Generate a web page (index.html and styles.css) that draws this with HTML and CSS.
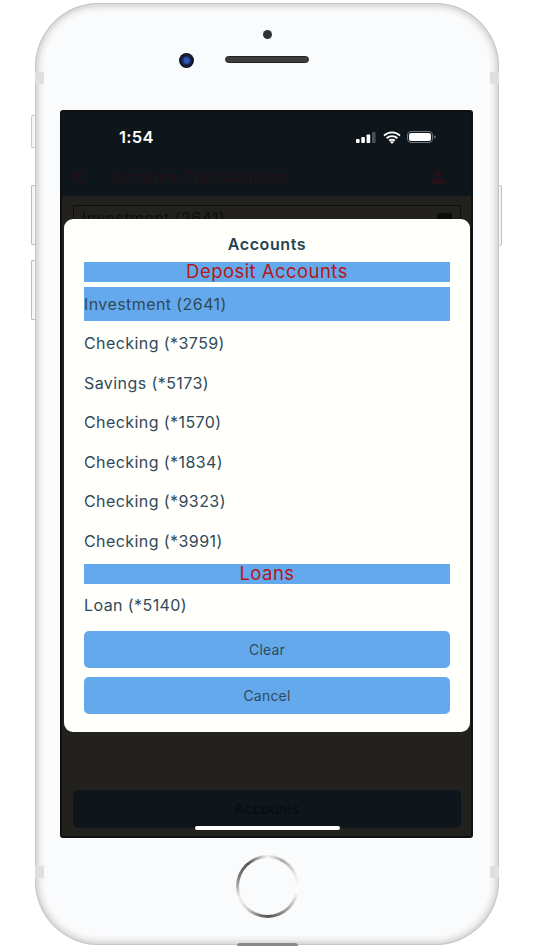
FILE: index.html
```html
<!DOCTYPE html>
<html lang="en">
<head>
<meta charset="utf-8">
<title>Accounts</title>
<link rel="stylesheet" href="styles.css">
</head>
<body>
<div class="phone">
  <span class="side side-mute"></span>
  <span class="side side-up"></span>
  <span class="side side-down"></span>
  <span class="side side-power"></span>
  <span class="notch notch-tl"></span>
  <span class="notch notch-tr"></span>
  <span class="notch notch-bl"></span>
  <span class="notch notch-br"></span>
  <span class="dock"></span>
  <div class="bezel-top">
    <span class="sensor"></span>
    <div class="speaker"><span class="camera"></span></div>
  </div>
  <div class="screen">
    <div class="app-head">
      <div class="status">
        <span class="time">1:54</span>
        <div class="status-icons">
          <svg width="21" height="11" viewBox="0 0 21 11"><rect x="0" y="7" width="3.6" height="4" rx=".8" fill="#fff"/><rect x="5.3" y="5" width="3.6" height="6" rx=".8" fill="#fff"/><rect x="10.6" y="2.5" width="3.6" height="8.5" rx=".8" fill="#fff"/><rect x="16" y="0" width="3.6" height="11" rx=".8" fill="#4a5055"/></svg>
          <svg width="18" height="13" viewBox="0 0 18 13"><path d="M1 4.6a11.5 11.5 0 0 1 16 0M3.6 7.3a7.8 7.8 0 0 1 10.8 0M6.2 9.8a4 4 0 0 1 5.6 0" fill="none" stroke="#fff" stroke-width="1.9"/><path d="M9 13l-1.9-2.2a2.8 2.8 0 0 1 3.8 0z" fill="#fff"/></svg>
          <svg width="29" height="12" viewBox="0 0 29 12"><rect x=".5" y=".5" width="25" height="11" rx="3.5" fill="none" stroke="#70767a"/><rect x="2" y="2" width="22" height="8" rx="2.2" fill="#fff"/><rect x="27" y="4.5" width="1.5" height="3" rx=".7" fill="#70767a"/></svg>
        </div>
      </div>
      <div class="nav">
        <svg class="back" width="12" height="18" viewBox="0 0 12 18"><path d="M10 2L3 9l7 7" fill="none" stroke="#260f15" stroke-width="2.4"/></svg>
        <span class="nav-title">Account Transactions</span>
        <svg class="user" width="14" height="14" viewBox="0 0 14 14"><circle cx="7" cy="3.6" r="3.3" fill="#260f15"/><path d="M0.500 14v-2.500C.5 9.300 3 8 7 8s6.500 1.300 6.500 3.500V14z" fill="#260f15"/></svg>
      </div>
    </div>
    <div class="app-body">
      <div class="select">
        <span>Investment (2641)</span>
        <span class="select-mark"></span>
      </div>
      <div class="accounts-btn">Accounts</div>
    </div>
    <span class="home-bar"></span>
    <div class="modal">
      <h2 class="modal-title">Accounts</h2>
      <div class="section">Deposit Accounts</div>
      <div class="row selected">Investment (2641)</div>
      <div class="row">Checking (*3759)</div>
      <div class="row">Savings (*5173)</div>
      <div class="row">Checking (*1570)</div>
      <div class="row">Checking (*1834)</div>
      <div class="row">Checking (*9323)</div>
      <div class="row">Checking (*3991)</div>
      <div class="section loans">Loans</div>
      <div class="row loan">Loan (*5140)</div>
      <div class="btn">Clear</div>
      <div class="btn">Cancel</div>
    </div>
  </div>
  <div class="bezel-bottom">
    <div class="home-ring"><span class="home-inner"></span></div>
  </div>
</div>
</body>
</html>
```
FILE: styles.css
```css
* { box-sizing: border-box; }
html, body { margin: 0; padding: 0; background: #fff; }
body { width: 534px; height: 950px; overflow: hidden; font-family: "Inter", "Liberation Sans", sans-serif; }

.phone {
  position: relative;
  width: 464px;
  height: 942px;
  margin: 3px 0 0 35px;
  border-radius: 64px;
  background: #fafbfd;
  box-shadow: inset 0 0 1px 1px #c4c4c4, inset 0 0 2px 4px #dedede, inset 0 0 2px 7px #f0f0f0, inset 0 0 1px 9px #f7f7f8;
}
.side { position: absolute; background: #f6f6f6; border: 1px solid #c8c8c8; border-right: 0; }
.side-mute { left: -4px; top: 112px; width: 4px; height: 33px; border-radius: 2px 0 0 2px; }
.side-up { left: -4px; top: 182px; width: 4px; height: 60px; border-radius: 2px 0 0 2px; border-color: #bbb; }
.side-down { left: -4px; top: 257px; width: 4px; height: 60px; border-radius: 2px 0 0 2px; border-color: #bbb; }
.side-power { right: -3px; top: 182px; width: 3px; height: 61px; border-radius: 0 2px 2px 0; border: 1px solid #c0c0c0; border-left: 0; }
.notch { position: absolute; width: 9px; height: 12px; background: #dfdfdf; }
.notch-tl { left: 0; top: 69px; }
.notch-tr { right: 0; top: 69px; }
.notch-bl { left: 0; bottom: 67px; }
.notch-br { right: 0; bottom: 67px; }
.dock { position: absolute; left: 202px; bottom: -1px; width: 61px; height: 3px; border-radius: 3px 3px 0 0; background: #8a8a8a; }

.bezel-top { height: 107px; display: flex; flex-direction: column; align-items: center; padding-top: 27px; }
.sensor { width: 9px; height: 9px; border-radius: 50%; background: #303236; }
.speaker { position: relative; width: 84px; height: 7px; margin-top: 17px; border-radius: 4px; background: #3c3d3f; border: 1px solid #222; }
.camera { position: absolute; left: -47px; top: -4px; width: 15px; height: 15px; border-radius: 50%; background: radial-gradient(circle, #2d56b8 0 22%, #16264e 40%, #0f1012 70%, #3a3a3a 100%); }

.screen { position: relative; width: 413px; height: 728px; margin-left: 25px; background: #22211e; border: 2px solid #101010; border-radius: 3px; overflow: hidden; }
.app-head { height: 84px; background: #0e161c; }
.status { display: flex; justify-content: space-between; align-items: center; height: 50px; padding: 0 35px 0 57px; }
.time { color: #fff; font-size: 16.500px; font-weight: 600; letter-spacing: .3px; }
.status-icons { display: flex; align-items: center; gap: 6px; }
.nav { display: flex; align-items: center; height: 30px; padding: 0 26px 0 10px; }
.nav-title { flex: 1; margin-left: 28px; color: #260f15; font-size: 16px; letter-spacing: .5px; }

.app-body { height: 642px; padding: 9px 10px 0 11px; }
.select { display: flex; justify-content: space-between; height: 41px; padding: 2px 8px; border: 1px solid #0d0d0d; color: #0d0d0d; font-size: 16px; letter-spacing: .45px; }
.select-mark { width: 15px; height: 16px; margin-top: 5px; background: #0d0d0d; border-radius: 2px; }
.accounts-btn { margin-top: 544px; height: 38px; border-radius: 5px; background: #0e161c; color: #070b0e; font-size: 14.500px; letter-spacing: .1px; text-align: center; line-height: 38px; }
.home-bar { position: absolute; left: 133px; top: 714px; width: 145px; height: 4px; border-radius: 2px; background: #fff; }

.modal { position: absolute; left: 2px; top: 107px; width: 406px; height: 513px; padding: 0 20px; border-radius: 9px; background: #fffffb; color: #30495a; }
.modal-title { margin: 0; height: 43px; padding-top: 16px; font-size: 16px; font-weight: 600; letter-spacing: .6px; line-height: 18px; text-align: center; color: #264452; }
.section { height: 20px; background: #64a9ec; color: #b5181a; font-size: 18.500px; letter-spacing: .45px; line-height: 19px; text-align: center; }
.row { height: 39.500px; font-size: 16px; letter-spacing: .42px; line-height: 39px; }
.selected { height: 34px; margin: 5px 0 3px; background: #64a9ec; line-height: 35px; }
.loans { margin-top: 3px; }
.loan { height: 47px; line-height: 43px; }
.btn { height: 37px; margin-bottom: 9px; border-radius: 5px; background: #64a9ec; font-size: 14px; letter-spacing: .2px; line-height: 37px; text-align: center; }

.bezel-bottom { display: flex; justify-content: center; padding-top: 17px; }
.home-ring { width: 63px; height: 63px; padding: 3px; border-radius: 50%; background: conic-gradient(#f2f2f2 0deg, #aaa 30deg, #eee 70deg, #fff 100deg, #bbb 130deg, #555 175deg, #666 190deg, #ddd 225deg, #eee 250deg, #777 290deg, #555 320deg, #ccc 350deg, #f2f2f2 360deg); }
.home-inner { display: block; width: 100%; height: 100%; border-radius: 50%; background: #fafbfd; }
```
